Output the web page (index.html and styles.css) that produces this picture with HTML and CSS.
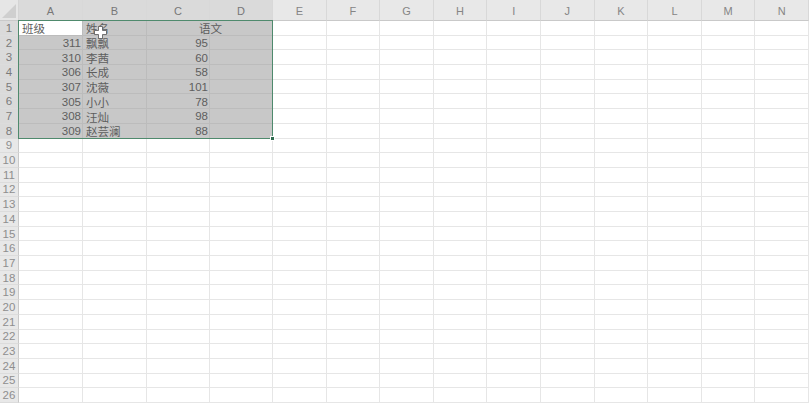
FILE: index.html
```html
<!DOCTYPE html>
<html lang="zh-CN">
<head>
    <meta charset="UTF-8">
    <meta name="viewport" content="width=device-width, initial-scale=1.0">
    <title>Sheet</title>
    <link rel="stylesheet" href="styles.css">
</head>
<body>
    <div class="sheet" id="sheet">
        <div class="corner"></div>
    </div>
    <script>
        const sheet = document.getElementById('sheet');
        const letters = 'ABCDEFGHIJKLMN'.split('');
        const ROWS = 26;

        // data for A1:C8
        const data = [
            ['班级', '姓名', '语文'],
            ['311', '飘飘', '95'],
            ['310', '李茜', '60'],
            ['306', '长成', '58'],
            ['307', '沈薇', '101'],
            ['305', '小小', '78'],
            ['308', '汪灿', '98'],
            ['309', '赵芸澜', '88']
        ];

        letters.forEach(function(l, i) {
            const h = document.createElement('div');
            h.className = 'col-head' + (i < 4 ? ' sel' : '');
            h.textContent = l;
            sheet.appendChild(h);
        });

        for (let r = 1; r <= ROWS; r++) {
            const rh = document.createElement('div');
            rh.className = 'row-head' + (r <= 8 ? ' sel' : '');
            rh.textContent = r;
            sheet.appendChild(rh);

            for (let c = 0; c < letters.length; c++) {
                if (r === 1 && c === 3) continue; // D1 covered by C1
                const cell = document.createElement('div');
                cell.className = 'cell';
                const inSel = r <= 8 && c < 4;
                if (inSel) cell.classList.add('sel');
                if (r === 1 && c === 0) cell.classList.add('active');

                const row = data[r - 1];
                if (row && row[c] !== undefined) {
                    cell.textContent = row[c];
                    if (r === 1 && c === 2) cell.classList.add('center', 'span2');
                    else if (r > 1 && (c === 0 || c === 2)) cell.classList.add('num');
                }
                sheet.appendChild(cell);
            }
        }

        const box = document.createElement('div');
        box.className = 'selection';
        box.innerHTML = '<span class="handle"></span>';
        sheet.appendChild(box);

        const cursor = document.createElement('div');
        cursor.className = 'cursor';
        cursor.innerHTML = '<svg width="13" height="13" viewBox="0 0 13 13"><path d="M4.5 0.5h4v4h4v4h-4v4h-4v-4h-4v-4h4z" fill="#fff" stroke="#555" stroke-width="0.8"/></svg>';
        sheet.appendChild(cursor);
    </script>
</body>
</html>
```

FILE: styles.css
```css
* {
    margin: 0;
    padding: 0;
    box-sizing: border-box;
}
body {
    background: #fff;
    font-family: "Liberation Sans", "Noto Sans CJK SC", sans-serif;
    font-size: 11px;
    color: #5a5a5a;
    overflow: hidden;
}
.sheet {
    position: relative;
    width: 809px;
    height: 403px;
    display: grid;
    grid-template-columns: 19px 64px 64px 63px 63px repeat(10, 1fr);
    grid-template-rows: 21px repeat(26, 1fr);
}
.corner {
    background: #e6e6e6;
    border-right: 1px solid #d4d4d4;
    border-bottom: 1px solid #c9c9c9;
    position: relative;
}
.corner::after {
    content: "";
    position: absolute;
    right: 2px;
    bottom: 2px;
    border-left: 14px solid transparent;
    border-bottom: 14px solid #cfcfcf;
}
.col-head {
    background: #e8e8e8;
    color: #858585;
    border-right: 1px solid #d8d8d8;
    border-bottom: 1px solid #c9c9c9;
    display: flex;
    align-items: center;
    justify-content: center;
    font-size: 11px;
    padding-top: 2px;
}
.col-head.sel {
    background: #dadada;
    color: #777;
    border-bottom-color: #8fae9f;
}
.row-head {
    background: #e8e8e8;
    color: #8e8e8e;
    border-right: 1px solid #c9c9c9;
    border-bottom: 1px solid #dcdcdc;
    display: flex;
    align-items: center;
    justify-content: center;
    font-size: 11.5px;
    overflow: hidden;
}
.row-head.sel {
    background: #dadada;
    color: #7a7a7a;
    border-right-color: #8fae9f;
}
.cell {
    border-right: 1px solid #e6e6e6;
    border-bottom: 1px solid #e6e6e6;
    display: flex;
    align-items: center;
    padding: 1px 1px 0 3px;
    white-space: nowrap;
    color: #5e5e5e;
    font-size: 11.5px;
    overflow: hidden;
    min-height: 0;
}
.cell.sel {
    background: #c8c8c8;
    border-color: #bcbcbc;
}
.cell.active {
    background: #fff;
}
.cell.num {
    justify-content: flex-end;
}
.cell.center {
    justify-content: center;
}
.cell.span2 {
    grid-column: span 2;
}
/* overlay: abs-pos grid child uses the grid area as its box */
.selection {
    position: absolute;
    grid-area: 2 / 2 / 10 / 6;
    top: -1px;
    left: -1px;
    right: 0;
    bottom: 0;
    border: 1px solid #4f8a6d;
    pointer-events: none;
}
.handle {
    position: absolute;
    right: -3px;
    bottom: -3px;
    width: 5px;
    height: 5px;
    background: #2f6b4f;
    border: 1px solid #fff;
}
.cursor {
    position: absolute;
    left: 94px;
    top: 26px;
    width: 13px;
    height: 13px;
}
```
